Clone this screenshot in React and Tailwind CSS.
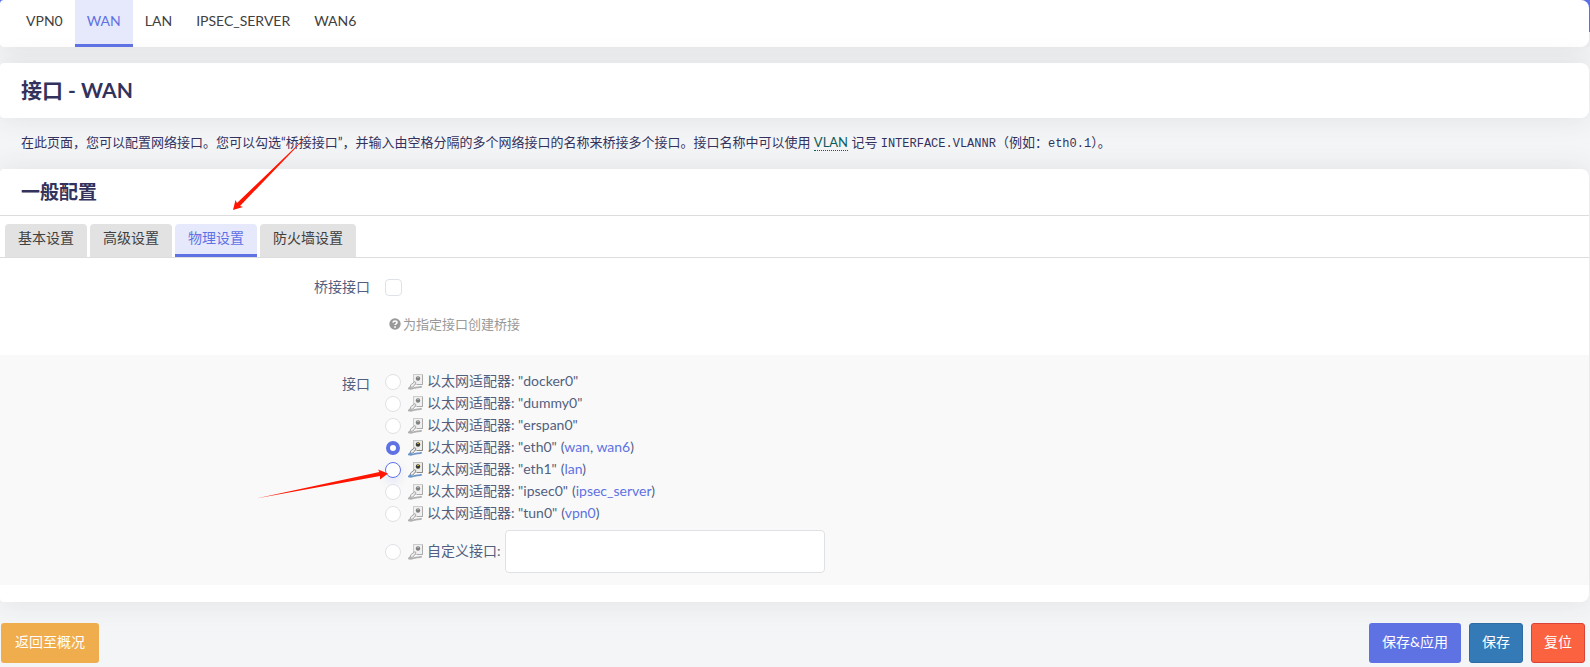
const interfaces = ['VPN0', 'WAN', 'LAN', 'IPSEC_SERVER', 'WAN6'];
const tabs = ['基本设置', '高级设置', '物理设置', '防火墙设置'];

const devices = [
  { name: 'docker0', networks: [] },
  { name: 'dummy0', networks: [] },
  { name: 'erspan0', networks: [] },
  { name: 'eth0', networks: ['wan', 'wan6'], up: true },
  { name: 'eth1', networks: ['lan'], up: true, highlighted: true },
  { name: 'ipsec0', networks: ['ipsec_server'] },
  { name: 'tun0', networks: ['vpn0'] }
];

const cardClass = 'rounded-l-sm rounded-r-lg bg-white shadow-[0_0_28px_rgba(60,60,60,0.1)]';
const radioClass =
  'h-4 w-4 shrink-0 appearance-none rounded-full border bg-white checked:m-px checked:h-3.5 checked:w-3.5 checked:border-4 checked:border-[#5e72e4]';

function DeviceIcon({ up }) {
  return (
    <svg width="16" height="16" viewBox="0 0 16 16" className="shrink-0" aria-hidden="true">
      <rect x="5.5" y="0.5" width="9" height="10" fill={up ? '#ebebe8' : '#f0f0f0'} stroke={up ? '#c4c4c0' : '#cccccc'} />
      <path d="M14.5 1v9.5H9" fill="none" stroke={up ? '#8c8c88' : '#ababab'} />
      <circle cx="10" cy="4.500" r="2.200" fill={up ? '#3a3a34' : '#808080'} />
      <path d="M9 3h2v1H9z" fill={up ? '#c4a928' : '#aaaaaa'} />
      <path d="M7 7.500 2.500 11v2.500l2.500-.5L8 9z" fill="#ededed" stroke={up ? '#8f8f8f' : '#aaaaaa'} />
      <path d="M3 12.500.8 14.500c2.500.8 4 .2 6-.7 2.500-1 4 .5 7-1.300" fill="none" stroke={up ? '#6f96c8' : '#b0b0b0'} strokeWidth="1.8" />
    </svg>
  );
}

function InterfaceNav() {
  return (
    <div className="-mr-px bg-[linear-gradient(#5e72e4_32px,#f0f1f3_32px)] pr-px">
      <nav className={`flex h-[47px] px-3.5 ${cardClass}`}>
        {interfaces.map((name) => (
          <a
            key={name}
            href={`#${name.toLowerCase()}`}
            className={`flex items-center border-b-3 px-3 pb-0.5 ${
              name === 'WAN' ? 'border-[#5e72e4] bg-[#e6e9fb] text-[#5e72e4]' : 'border-transparent text-[#404040]'
            }`}
          >
            {name}
          </a>
        ))}
      </nav>
    </div>
  );
}

function DeviceRow({ device }) {
  return (
    <div className="flex h-[22px] items-center">
      <input
        type="radio"
        name="ifname"
        id={`dev-${device.name}`}
        defaultChecked={device.name === 'eth0'}
        className={`${radioClass} ${
          device.highlighted ? 'border-[#5e72e4] shadow-[0_4px_10px_rgba(94,114,228,0.15)]' : 'border-[#dee2e6]'
        }`}
      />
      <label htmlFor={`dev-${device.name}`} className="ml-[7px] flex items-center gap-[3px]">
        <DeviceIcon up={device.up} />
        <span className="pb-0.5">以太网适配器: "{device.name}"</span>
      </label>
      {device.networks.length > 0 && (
        <span className="ml-1 pb-0.5">
          (
          {device.networks.map((network, i) => (
            <span key={network}>
              {i > 0 && ', '}
              <a href={`#${network}`} className="text-[#5e72e4]">{network}</a>
            </span>
          ))}
          )
        </span>
      )}
    </div>
  );
}

function HelpIcon() {
  return (
    <svg width="12" height="12" viewBox="0 0 12 12" aria-hidden="true">
      <circle cx="6" cy="6" r="5.700" fill="#999" />
      <path d="M4 4.600c.2-2.200 4-2.200 4 0 0 1.300-1.900 1.200-1.900 2.500" fill="none" stroke="#fff" strokeWidth="1.600" />
      <rect x="5.200" y="8.200" width="1.700" height="1.600" fill="#fff" />
    </svg>
  );
}

// hand-drawn pointers laid over the form
function Pointers() {
  return (
    <svg className="pointer-events-none absolute left-0 top-0" width="400" height="510" aria-hidden="true">
      <path d="M311 132 240 206l3 1-10 3 2.500-10 1.500 3z" fill="#ff1500" />
      <path d="M256 498.500 379.500 472l-1.500-2.500 10 4-8 6v-3.500z" fill="#ff1500" />
    </svg>
  );
}

export default function App() {
  return (
    <div className="relative min-h-screen overflow-hidden bg-[#f4f5f7] pr-px font-['Lato','Noto_Sans_CJK_SC',sans-serif] text-sm text-[#525f7f]">
      <InterfaceNav />

      <h2 className={`mt-4 flex h-[55px] items-center px-[21px] pb-0.5 text-[21px] font-bold text-[#32325d] ${cardClass}`}>
        接口 - WAN
      </h2>

      <p className="flex h-[51px] items-center px-[21px] pb-0.5 text-[13px] text-[#32325d]">
        <span>
          在此页面，您可以配置网络接口。您可以勾选“桥接接口”，并输入由空格分隔的多个网络接口的名称来桥接多个接口。接口名称中可以使用{' '}
          <abbr title="Virtual Local Area Network" className="border-b border-dotted border-[#0b5c5c] text-[#0b5c5c] no-underline">VLAN</abbr>{' '}
          记号 <code className="font-['Liberation_Mono',monospace] text-xs">INTERFACE.VLANNR</code>（例如：
          <code className="font-['Liberation_Mono',monospace] text-xs">eth0.1</code>）。
        </span>
      </p>

      <form id="network" className={`pb-[17px] ${cardClass}`}>
        <h3 className="flex h-[47px] items-center border-b border-[#dddddd] px-[21px] text-[19px] font-bold text-[#32325d]">
          一般配置
        </h3>

        <div className="flex gap-[3px] border-b border-[#dddddd] pl-[5px] pt-2">
          {tabs.map((tab) => (
            <button
              key={tab}
              type="button"
              className={`h-[33px] rounded-t border-b-3 px-[13px] pb-0.5 ${
                tab === '物理设置' ? 'border-[#5e72e4] bg-[#e6e9fb] text-[#5e72e4]' : 'border-[#e2e2e2] bg-[#e2e2e2] text-[#404040]'
              }`}
            >
              {tab}
            </button>
          ))}
        </div>

        <div className="flex h-[97px] pt-[19px]">
          <label htmlFor="bridge" className="h-5 w-[370px] shrink-0 text-right leading-5">桥接接口</label>
          <div className="ml-[15px]">
            <input id="bridge" type="checkbox" className="mt-0.5 block h-[17px] w-[17px] appearance-none rounded border border-[#dee2e6] bg-white" />
            <p className="mt-[18px] flex items-center gap-0.5 pl-1 text-[13px] leading-5 text-[#999999]">
              <HelpIcon />
              为指定接口创建桥接
            </p>
          </div>
        </div>

        <fieldset className="flex bg-[#f9f9f9] pb-3 pt-4">
          <span className="mt-[3px] w-[370px] shrink-0 text-right leading-5">接口</span>
          <div className="ml-[15px]">
            {devices.map((device) => (
              <DeviceRow key={device.name} device={device} />
            ))}
            <div className="mt-[5px] flex items-center">
              <input type="radio" name="ifname" id="custom" className={`${radioClass} border-[#dee2e6]`} />
              <label htmlFor="custom" className="ml-[7px] flex items-center gap-[3px]">
                <DeviceIcon />
                <span className="pb-0.5">自定义接口:</span>
              </label>
              <input
                type="text"
                aria-label="自定义接口"
                className="ml-1 h-[43px] w-80 rounded border border-[#dee2e6] bg-white px-3"
              />
            </div>
          </div>
        </fieldset>
      </form>

      <div className="mt-[21px] flex items-center gap-2 pb-1 pl-px pr-1 text-white">
        <button type="button" className="mr-auto h-10 rounded-[3px] bg-[#f0ad4e] px-3.5 pb-0.5">返回至概况</button>
        <button type="button" className="h-10 rounded-[3px] bg-[#5e72e4] px-[13px] pb-0.5">保存&amp;应用</button>
        <button type="button" className="h-10 rounded-[3px] border border-[#2e6da4] bg-[#337ab7] px-3 pb-0.5">保存</button>
        <button type="button" className="h-10 rounded-[3px] border border-[#d9433a] bg-[#fb6340] px-3 pb-0.5">复位</button>
      </div>

      <Pointers />
    </div>
  );
}
